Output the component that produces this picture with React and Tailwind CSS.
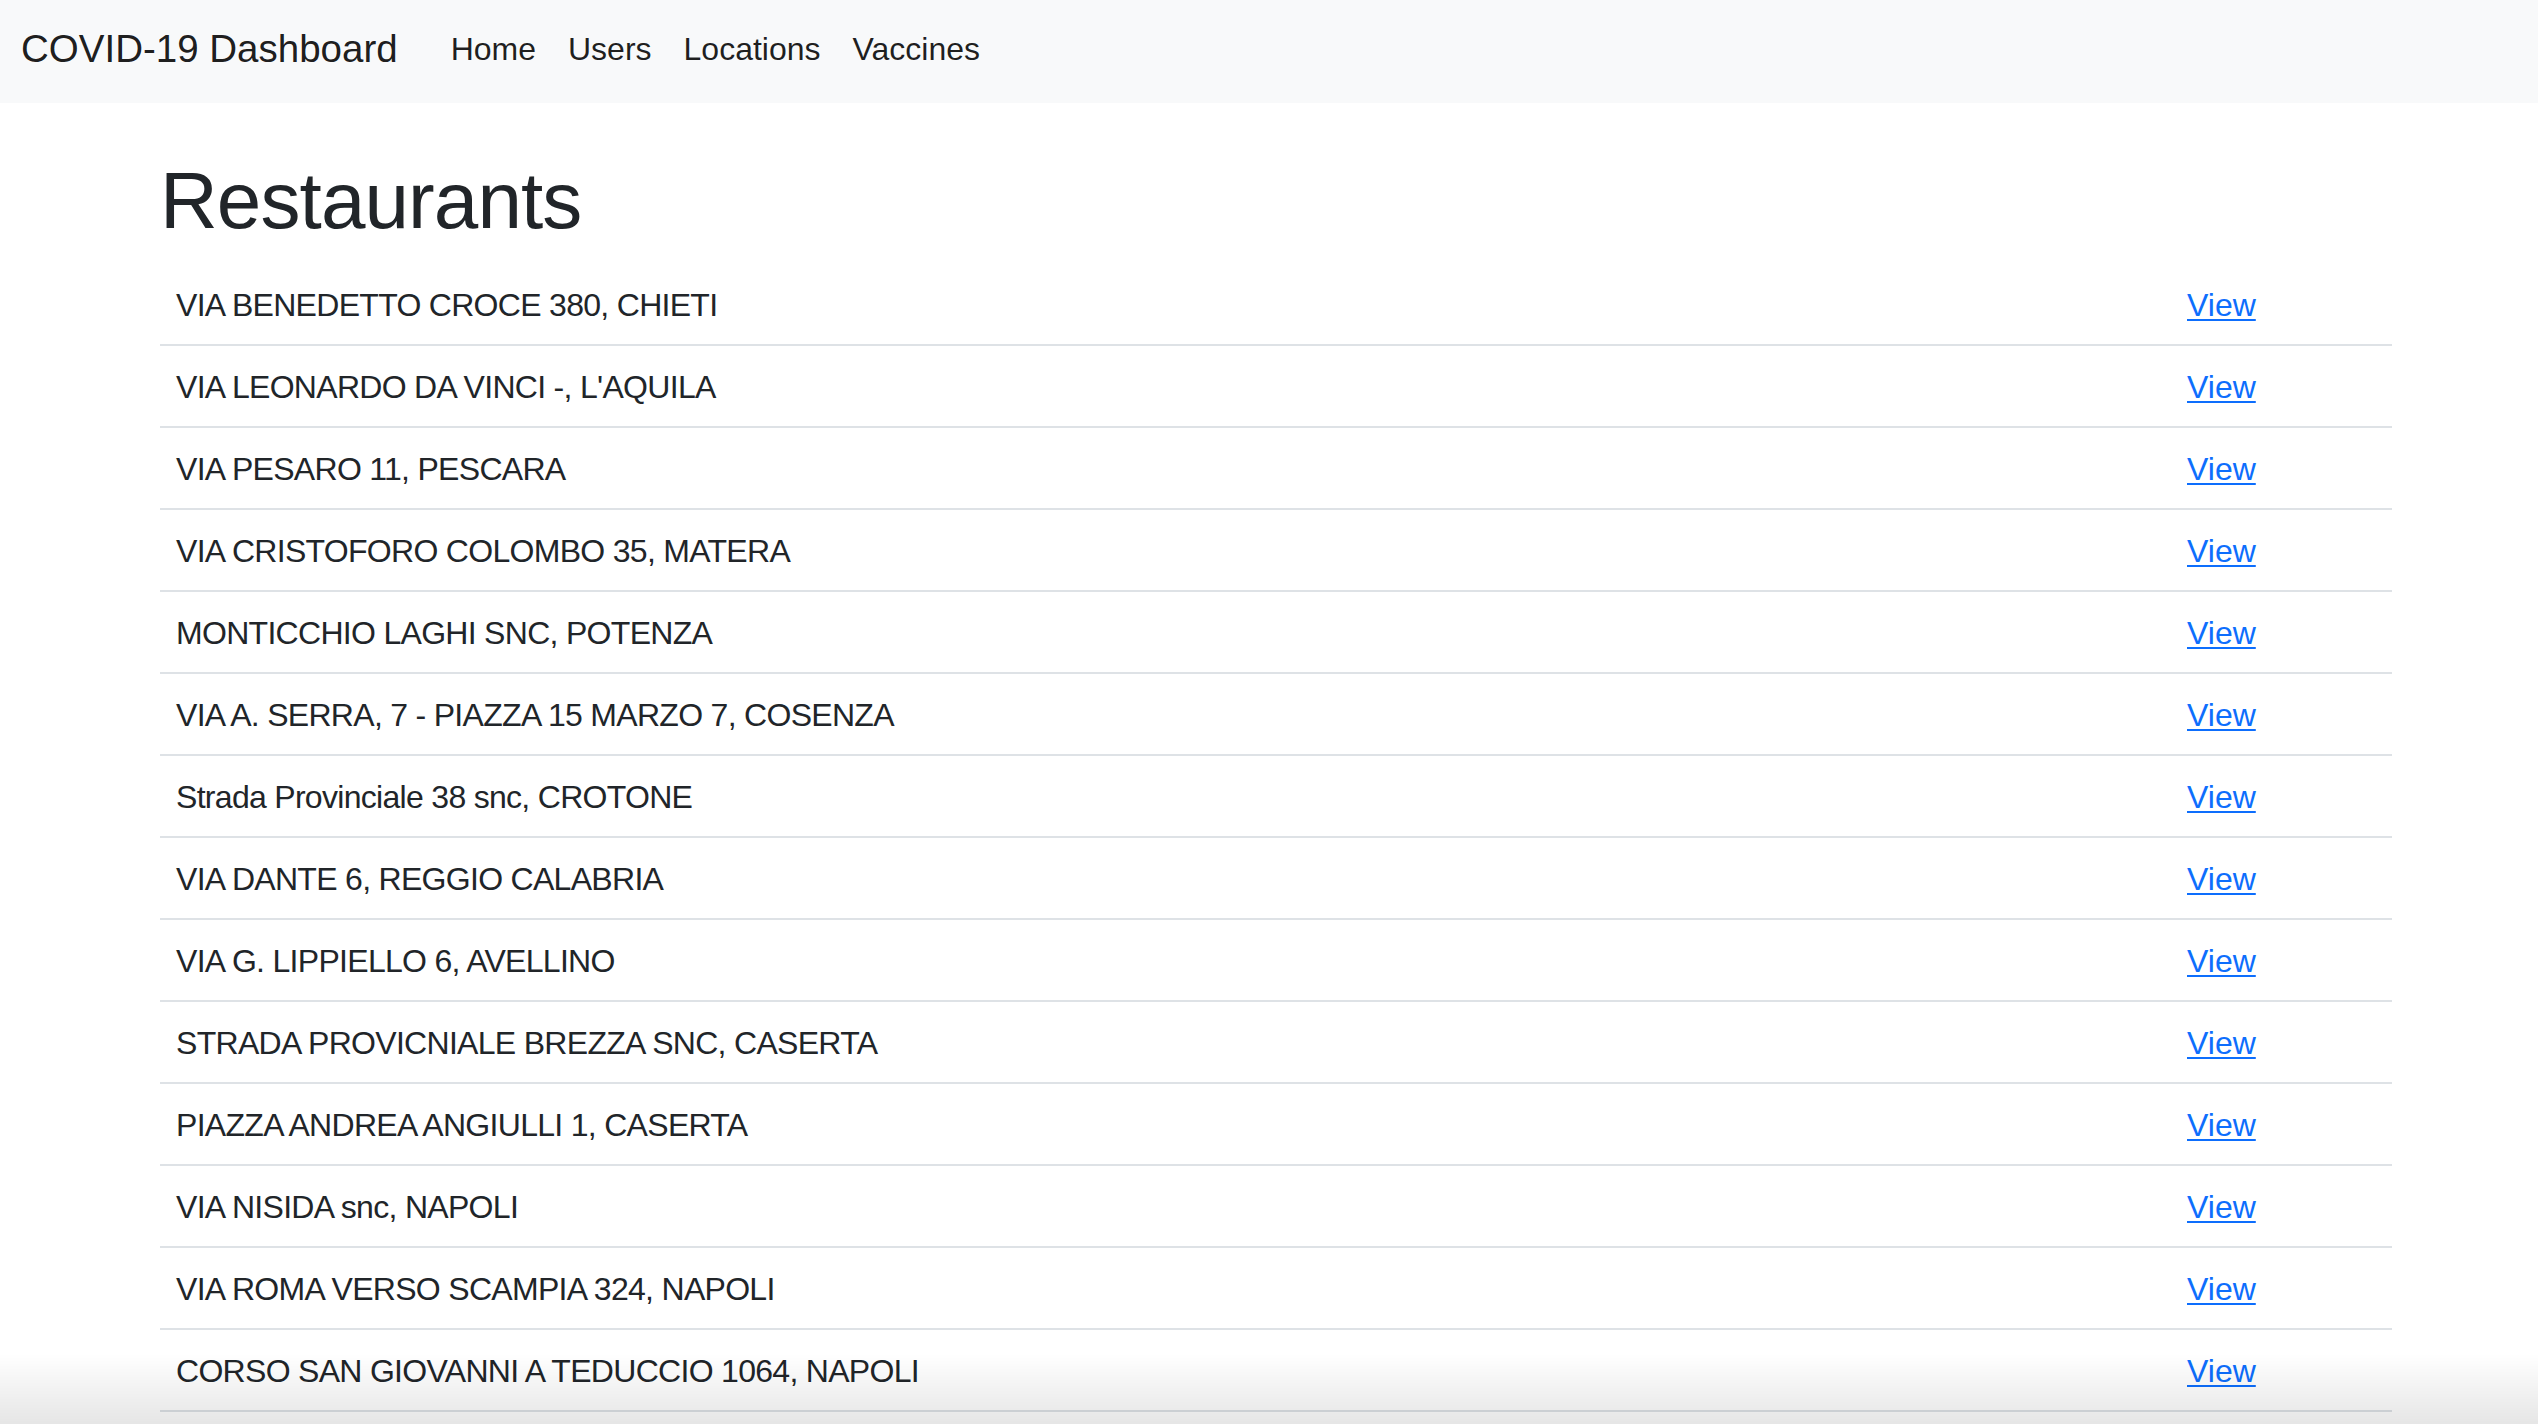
const rows = [
  "VIA BENEDETTO CROCE 380, CHIETI",
  "VIA LEONARDO DA VINCI -, L'AQUILA",
  "VIA PESARO 11, PESCARA",
  "VIA CRISTOFORO COLOMBO 35, MATERA",
  "MONTICCHIO LAGHI SNC, POTENZA",
  "VIA A. SERRA, 7 - PIAZZA 15 MARZO 7, COSENZA",
  "Strada Provinciale 38 snc, CROTONE",
  "VIA DANTE 6, REGGIO CALABRIA",
  "VIA G. LIPPIELLO 6, AVELLINO",
  "STRADA PROVICNIALE BREZZA SNC, CASERTA",
  "PIAZZA ANDREA ANGIULLI 1, CASERTA",
  "VIA NISIDA snc, NAPOLI",
  "VIA ROMA VERSO SCAMPIA 324, NAPOLI",
  "CORSO SAN GIOVANNI A TEDUCCIO 1064, NAPOLI",
];

export default function App() {
  return (
    <div className="min-h-screen bg-white text-[#212529] font-['Liberation_Sans',Arial,sans-serif]">
      <nav className="h-[103px] bg-[#f8f9fa] flex items-center pl-[21px] pb-[5px]">
        <a href="#" className="text-[38.5px] leading-[60px] text-[rgba(0,0,0,0.9)] mr-[37px]">
          COVID-19 Dashboard
        </a>
        <ul className="flex items-center">
          {["Home", "Users", "Locations", "Vaccines"].map((l) => (
            <li key={l}>
              <a href="#" className="block px-[16px] text-[32px] leading-[48px] text-[rgba(0,0,0,0.88)]">
                {l}
              </a>
            </li>
          ))}
        </ul>
      </nav>
      <main className="ml-[160px] w-[2232px]">
        <h1 className="mt-[50px] mb-[15px] text-[80px] leading-[96px] font-medium tracking-[-0.9px] text-[#212529]">
          Restaurants
        </h1>
        <div className="flex flex-col">
          {rows.map((r, i) => (
            <div key={i} className="grid grid-cols-[1fr_221px] border-b-2 border-[#dee2e6]">
              <div className="px-[16px] pt-[17px] pb-[15px] text-[32px] leading-[48px] tracking-[-0.7px]">{r}</div>
              <div className="px-[16px] pt-[17px] pb-[15px] text-[32px] leading-[48px]">
                <a href="#" className="text-[#0d6efd] underline decoration-2 underline-offset-[3px]">
                  View
                </a>
              </div>
            </div>
          ))}
        </div>
      </main>
      <div className="pointer-events-none fixed inset-x-0 bottom-0 h-[70px] bg-linear-to-b from-transparent to-black/10" />
    </div>
  );
}
